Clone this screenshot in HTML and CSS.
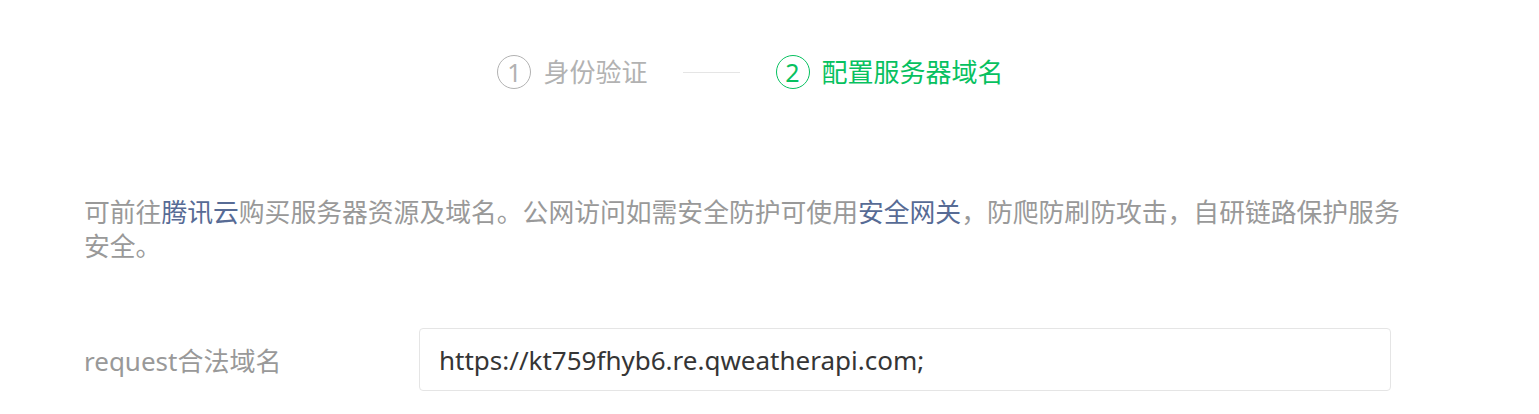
FILE: index.html
```html
<!DOCTYPE html>
<html lang="zh-CN">
<head>
<meta charset="utf-8">
<title>配置服务器域名</title>
<link rel="stylesheet" href="styles.css">
</head>
<body>
<div class="page">
  <div class="steps">
    <div class="step step-done">
      <span class="step-num">1</span>
      <span class="step-title">身份验证</span>
    </div>
    <div class="step-line"></div>
    <div class="step step-active">
      <span class="step-num">2</span>
      <span class="step-title">配置服务器域名</span>
    </div>
  </div>
  <p class="tips">可前往<a class="link" href="#">腾讯云</a>购买服务器资源及域名。公网访问如需安全防护可使用<a class="link" href="#">安全网关</a>，防爬防刷防攻击，自研链路保护服务安全。</p>
  <div class="form-row">
    <label class="form-label">request合法域名</label>
    <div class="form-input">https://kt759fhyb6.re.qweatherapi.com;</div>
  </div>
</div>
</body>
</html>
```
FILE: styles.css
```css
html, body {
  margin: 0;
  padding: 0;
  background: #fff;
}
body {
  font-family: "Noto Sans", "Noto Sans CJK SC", sans-serif;
  font-size: 26px;
  color: #353535;
}
.page {
  margin-left: 84px;
  width: 1333px;
  padding-top: 54px;
}
.steps {
  display: flex;
  justify-content: center;
  align-items: center;
  height: 36px;
}
.step {
  display: flex;
  align-items: center;
  gap: 12px;
}
.step-num {
  width: 32px;
  height: 32px;
  border: 1px solid currentColor;
  border-radius: 50%;
  display: flex;
  align-items: center;
  justify-content: center;
  font-size: 25px;
  line-height: 1;
}
.step-title {
  line-height: 36px;
}
.step-done {
  color: #b2b2b2;
}
.step-active {
  color: #07c160;
}
.step-line {
  width: 57px;
  height: 1px;
  background: #e5e5e5;
  margin: 0 36px 0 35px;
}
.tips {
  margin: 105px 0 0;
  width: 1333px;
  font-size: 25.8px;
  line-height: 34px;
  color: #999;
}
.link {
  color: #576b95;
  text-decoration: none;
}
.form-row {
  display: flex;
  align-items: center;
  margin-top: 65px;
}
.form-label {
  width: 335px;
  color: #999;
}
.form-input {
  width: 932px;
  height: 61px;
  border: 1px solid #e5e5e5;
  border-radius: 4px;
  padding: 0 19px;
  display: flex;
  align-items: center;
  color: #353535;
}
```
